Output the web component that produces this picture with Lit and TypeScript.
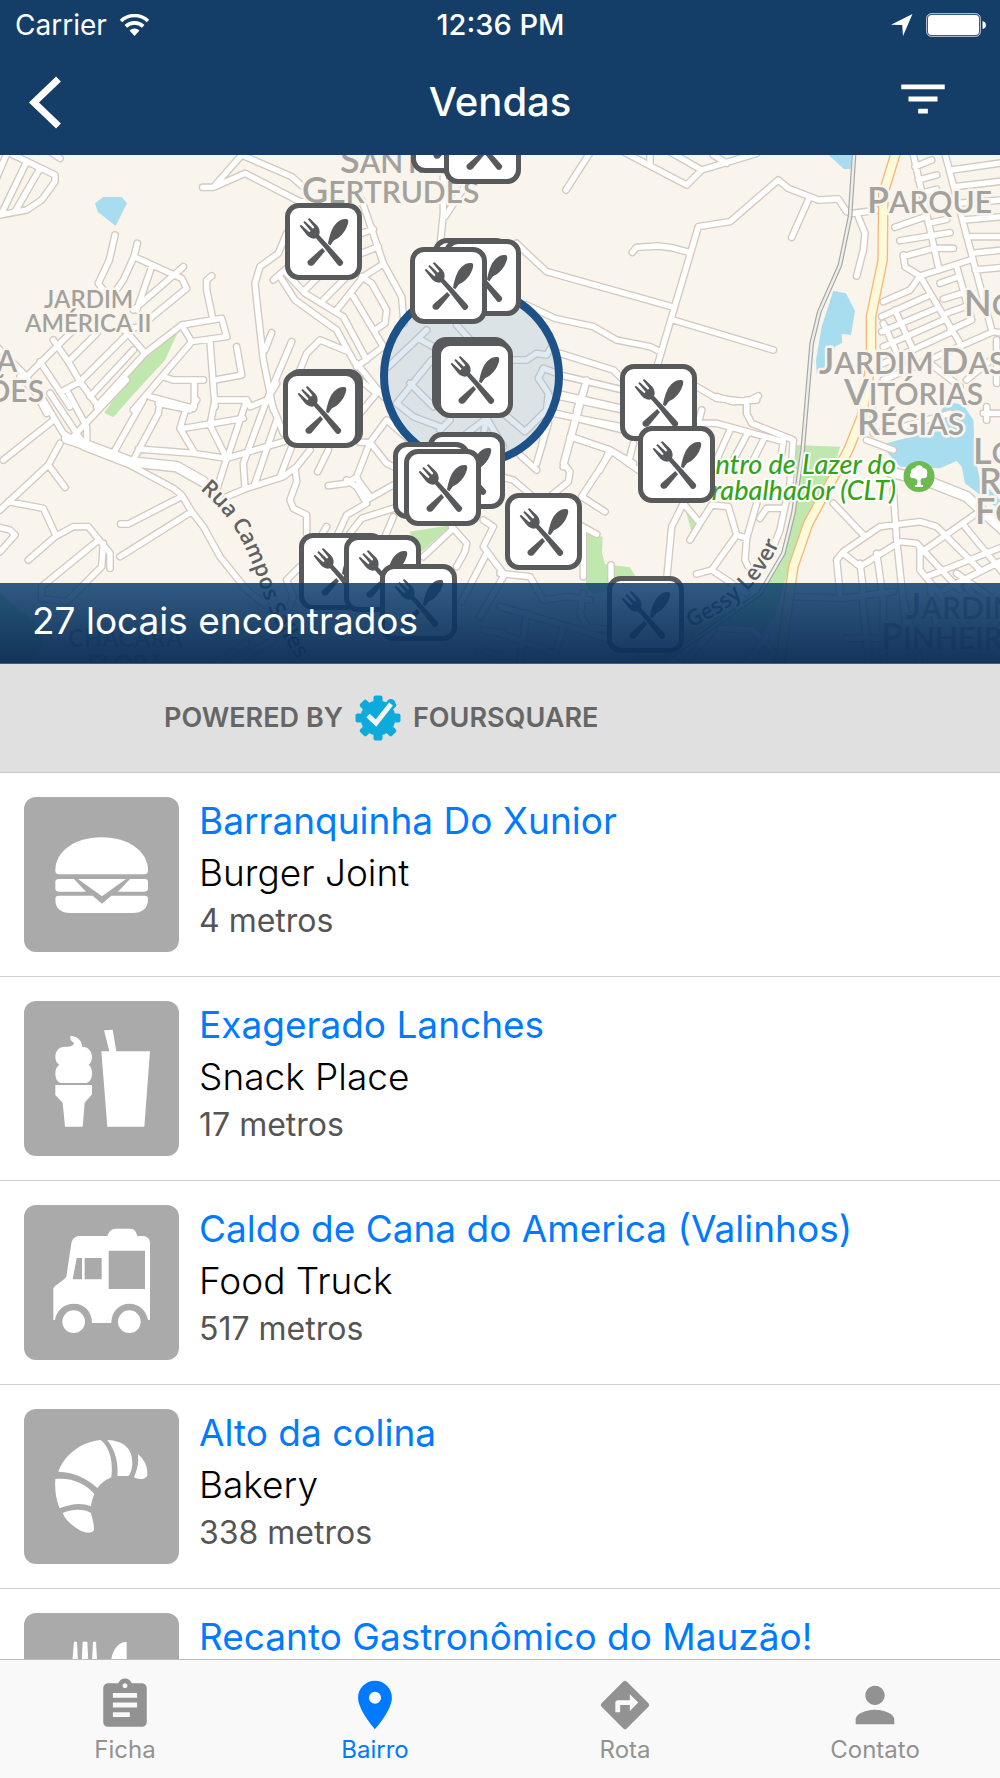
import { LitElement, html, svg, css } from "lit";
import { customElement, property, state } from "lit/decorators.js";

interface Sheet {
  x: number;
  y: number;
  roads: string;
}

/* Street network, drawn sheet by sheet at three units per map pixel. */
const SHEETS: Sheet[] = [
  {
    x: 0,
    y: 150,
    roads: `M25 0L-30 130M30 10L165 75 165 95 125 150 80 180 0 195M80 35L5 190M120 55L45 185M130 -10L180 25
      M608 112H640L725 15 875 80 915 115M640 112L735 70 900 155H960
      M345 255L328 330 295 400 325 440M412 280L402 320 370 390 335 440M402 320L545 385 560 415 420 530 370 540M455 350L410 480
      M550 350L400 480M635 378L620 390 620 420 637 500M380 545L435 610M215 545L80 680 -10 590M435 610L545 525 665 505 680 560 575 575 400 780M545 525L575 575
      M160 570L205 635 240 695 295 770M120 635L210 770M205 635L290 550M185 725L240 695 380 555M270 740L400 600M290 770L435 610M80 680L140 790
      M490 680L520 690 610 690M583 695V770M630 575L645 770M645 690L725 675 710 590M645 750H740L750 770 800 750 830 700M450 740L580 775
      M860 250L835 310 780 350 765 400 770 450 790 630 820 780M795 600L815 548M875 575L805 740M820 390L860 355M840 380L885 450 1010 540 1065 640
      M860 370L915 430 1030 500 1100 630M915 420L965 370M970 450L1035 385M1010 480L1090 380 1145 345M1085 150L1150 340 1205 440 1212 520M1085 250L1120 238M1085 310L1135 290
      M1085 380L1115 400 1160 480 1155 520 1125 540M1060 440L1150 590M1070 650L1150 590M900 660L920 610 960 570 1045 605M1070 640L1150 740M1080 690L1130 730 1080 790
      M1330 80V190L1320 290M1335 200L1400 100`,
  },
  {
    x: 500,
    y: 150,
    roads: `M275 0L198 120M360 0L560 105 605 60 500 0M450 0V45M605 60L670 40 770 10M640 15L680 40M50 280L70 300 140 365 515 470M80 465L165 505 280 530 350 570 450 590 480 605
      M465 670L595 230 690 215 835 90 865 115 955 150 1015 147 1040 185 1060 190 1150 178M925 150L875 262M397 307L410 292 475 288 515 293 570 308M520 510L820 600
      M1075 200L1095 250 1090 300 1070 378M180 610L340 660 370 690M180 675L370 720M260 690L230 780M180 740L370 780M590 710L650 745 740 755 775 738M740 755V790
      M1237 0L1315 350M1332 0L1475 540M1245 50L1295 30M1255 90L1310 75M1262 130L1310 118M1355 60L1510 38M1365 110L1510 93M1372 160L1510 150M1390 210L1510 200M1400 260H1510M1415 310L1510 300M1425 360L1510 352
      M1185 232L1275 200M1285 220L1340 208M1200 272L1350 248M1210 320L1300 295 1360 295M1210 315L1215 350 1260 378 1410 330M1260 378L1380 580M1260 378L1230 420 1150 455
      M1145 500L1290 435M1145 545L1310 475M1150 590L1330 510M1150 640L1350 548M1185 480L1240 600M1370 350L1415 510 1350 540M1320 400L1375 380M1330 447L1385 430M1340 490L1395 470
      M1150 690L1480 545 1510 550M1150 520L1210 650M1290 640L1380 710M1400 690L1510 600M1490 570V700`,
  },
  {
    x: 0,
    y: 400,
    roads: `M155 65L10 180M60 -70L130 0 190 100 250 140 390 195 520 265 545 285 575 335 610 380 660 470 740 570 830 640M0 330L145 195 180 130M145 195L195 262M25 305L130 325 165 400
      M85 480L165 410 220 380H265L330 460V505M290 425L125 560V595L200 605 305 500 310 430M-10 380L30 390 45 405 0 455M545 290L385 372H362M575 335L360 470
      M200 -30L260 80V125M210 120L380 -60M150 -20L250 130M340 160L430 0M400 180L475 40 480 0M475 10L570 30 590 0M645 0L630 75 680 175 650 270M415 147L580 160 680 175 850 125
      M550 85L630 72 730 55M585 160L540 85 560 20M740 0L685 165M800 0L730 190 735 265M830 60L765 250M875 140L840 230M680 290L740 265 850 230 890 200 930 150
      M885 205L890 245 870 300 880 325 920 345 920 400M985 150L953 215M810 0L850 100M985 257L1040 250 1065 235M1080 127H1110L1160 60 1240 130M1110 127L1070 230 1100 300 1180 255
      M1110 127L1160 190 1200 210M1040 240L1070 260 1100 310 1040 345 1010 410M1070 235L1110 290M1180 325L1085 355 1050 400M1155 410L1180 350M860 540L900 500M860 540L880 590 860 640M980 380L965 405
      M1355 380L1400 430 1395 455 1370 500M1360 385L1270 470M1480 380L1450 440 1510 520M1450 360L1480 380M1460 460L1385 605M1510 530L1440 650M1450 690L1510 700M1440 750L1510 770M650 790L740 730M700 790L820 720`,
  },
  {
    x: 500,
    y: 400,
    roads: `M60 165L110 210M240 0L190 190 210 215 205 245 150 290M170 40L370 90M215 110L330 150 415 210M330 160L245 290 315 335M400 130L385 190M110 190L145 70M0 230L40 240 110 300M230 370L290 403M250 390V530
      M600 70L650 70 850 125 845 160M690 90L650 180M740 105L700 180M790 120L760 180M605 30L595 70M740 0V40L755 70 880 120 870 250 840 390 820 440M650 -10L700 5 770 0
      M550 310L515 380 500 540M550 310L600 370 570 420M600 370L635 315 685 320 710 405 740 415M710 405L635 510 590 522M635 510L740 580M850 325H800L780 355M770 310L740 415 735 480 745 500M333 495V540
      M1000 310L1095 410M1010 480L1030 455 1140 380 1260 365 1310 380 1440 510M1010 480L1020 580M1030 460L1080 500 1200 425 1250 430 1380 570M1080 490L1090 570M1130 460L1150 600M1180 270L1190 420 1220 700
      M1260 440V510L1400 680M1260 460L1430 340M1280 530L1510 440M1395 380L1510 520M1330 570L1510 480M1370 520L1510 620M1460 20V60M1450 40H1510M1120 100L1160 95 1350 40M1100 120L1180 150
      M870 590L1030 595 1180 575M1085 580L1105 780M1150 600V780M1210 600L1260 790M1290 560L1320 740M0 520L90 530 130 600 200 590 270 600M0 620L240 690 330 720M0 700L160 760M250 580L240 640 260 680 330 690M80 640L60 780M190 680L160 780
      M660 685L760 690 850 790M640 690L560 780M800 710L740 790M1040 715H1150M1400 560L1510 700`,
  },
  {
    x: 370,
    y: 250,
    roads: `M170 240L55 350M145 265L190 290M185 330L80 460 130 500 210 530M120 400L190 470M260 225L310 280M430 330L470 330 500 310 530 315 545 290
      M560 370L520 355 505 385 535 430 530 480 465 545 400 490M350 500L340 560M290 550L350 505 400 590M210 540L240 510M540 440L515 590M650 395L580 650M560 430L780 480M550 490L780 535M600 560L720 600 690 660M720 600L790 640`,
  },
];

const WIDE_ROADS: Sheet[] = [
  { x: 0, y: 400, roads: "M200 115L260 135 390 185 530 200 610 245" },
  { x: 500, y: 400, roads: "M1170 215L1300 250 1400 290 1510 390" },
];

const PINS: [number, number][] = [
  [411, 96], [444, 107], [285, 203], [433, 238], [444, 239], [410, 247],
  [432, 337], [434, 339], [436, 341], [286, 369], [283, 371], [620, 364],
  [638, 426], [428, 432], [393, 442], [404, 449], [505, 493], [308, 533],
  [299, 533], [344, 535], [380, 564], [607, 576],
];

interface Place {
  name: string;
  kind: string;
  metres: number;
  icon: string;
}

const PLACES: Place[] = [
  { name: "Barranquinha Do Xunior", kind: "Burger Joint", metres: 4, icon: "burger" },
  { name: "Exagerado Lanches", kind: "Snack Place", metres: 17, icon: "snack" },
  { name: "Caldo de Cana do America (Valinhos)", kind: "Food Truck", metres: 517, icon: "truck" },
  { name: "Alto da colina", kind: "Bakery", metres: 338, icon: "bakery" },
  { name: "Recanto Gastronômico do Mauzão!", kind: "", metres: 0, icon: "restaurant" },
];

const PLACE_ICONS: Record<string, unknown> = {
  burger: svg`<path d="M94 220C94 165 150 121 233 121S372 165 372 220Q372 232 362 232H104Q94 232 94 220z"/>
    <path d="M104 246H150L186 284H104Q94 284 94 274V256Q94 246 104 246zM162 246H306L234 298zM318 246H362Q372 246 372 256V274Q372 284 362 284H282z"/>
    <path d="M104 296H206L234 320 262 296H362Q372 296 372 306C372 335 355 348 325 348H140C110 348 94 335 94 306Q94 296 104 296z"/>`,
  snack: svg`<path d="M140 104C162 106 174 120 175 137C192 137 204 150 204 168C204 180 200 187 194 191C202 197 204 205 204 218C204 235 195 246 182 246H116C102 246 94 235 94 218C94 205 97 197 106 191C97 186 94 178 94 168C94 148 106 137 122 137C138 138 150 134 150 125C142 121 136 112 140 104z"/>
    <path d="M94 252H204V280L182 305 176 377H123L116 305 94 282zM232 151H256L240 88 266 86 277 151H378L361 377H250z"/>`,
  truck: svg`<path fill-rule="evenodd" d="M88 345V250C92 240 118 228 127 215L142 115C145 100 155 93 168 93H250C255 80 262 71 275 71H318C332 71 336 80 340 93H355C370 93 378 102 378 115V345H372C366 315 345 296 316 296C285 296 262 320 262 354H204C204 320 182 296 150 296C120 296 98 315 93 345zM158 159H174V223H146zM182 159H233V223H182zM254 137H363V252H254z"/>
    <circle cx="149" cy="350" r="34"/><circle cx="316" cy="350" r="34"/>`,
  bakery: svg`<path d="M103 188C120 140 170 98 230 93C258 115 268 160 262 205C245 212 232 222 220 237C185 205 150 190 103 188z"/>
    <path d="M250 93C300 95 325 120 325 160C325 180 320 195 313 201H280C284 165 275 125 250 93zM342 136C362 152 372 175 370 200C362 213 342 212 330 205C338 185 345 165 342 136z"/>
    <path d="M94 210C145 205 185 225 211 255C206 268 202 280 201 292C170 280 140 285 107 298C95 270 92 240 94 210zM116 312C150 298 180 300 201 312C205 330 212 350 209 365C198 375 180 370 165 362C145 350 125 335 116 312z"/>`,
  restaurant: svg`<path d="M150 86h9l3 60h11l3-60h14l3 60h11l3-60h9l4 70c0 24-14 34-24 38l6 170c0 20-40 20-40 0l6-170c-10-4-24-14-24-38zM260 150C264 112 282 86 308 87V364c0 20-34 20-34 0l6-134h-22z"/>`,
};

interface Tab {
  id: string;
  label: string;
  path: string;
}

const TABS: Tab[] = [
  {
    id: "ficha",
    label: "Ficha",
    path: "M19 3h-4.18C14.4 1.84 13.3 1 12 1c-1.3 0-2.4.84-2.82 2H5c-1.1 0-2 .9-2 2v14c0 1.1.9 2 2 2h14c1.100 0 2-.9 2-2V5c0-1.100-.9-2-2-2zm-7 0c.55 0 1 .45 1 1s-.45 1-1 1-1-.45-1-1 .45-1 1-1zm2 14H7v-2h7v2zm3-4H7v-2h10v2zm0-4H7V7h10v2z",
  },
  {
    id: "bairro",
    label: "Bairro",
    path: "M12 2C8.130 2 5 5.130 5 9c0 5.250 7 13 7 13s7-7.750 7-13c0-3.870-3.130-7-7-7zm0 9.500a2.500 2.500 0 1 1 0-5 2.500 2.500 0 0 1 0 5z",
  },
  {
    id: "rota",
    label: "Rota",
    path: "M21.710 11.290l-9-9a1 1 0 0 0-1.410 0l-9 9a1 1 0 0 0 0 1.410l9 9a1 1 0 0 0 1.410 0l9-9a1 1 0 0 0 0-1.410zM14 14.500V12h-4v3H8v-4c0-.55.45-1 1-1h5V7.500l3.500 3.500-3.500 3.500z",
  },
  {
    id: "contato",
    label: "Contato",
    path: "M12 12c2.210 0 4-1.790 4-4s-1.790-4-4-4-4 1.790-4 4 1.790 4 4 4zm0 2c-2.670 0-8 1.340-8 4v2h16v-2c0-2.660-5.330-4-8-4z",
  },
];

const FONT = css`"Inter", "Roboto", "Liberation Sans", sans-serif`;

@customElement("status-bar")
class StatusBar extends LitElement {
  static styles = css`
    :host { display: block; }
    .bar { display: grid; grid-template-columns: 1fr auto 1fr; align-items: center; height: 48px; padding: 2px 14px 0 15px; box-sizing: border-box; color: #fff; line-height: 32px; }
    .left { display: flex; align-items: center; gap: 12px; font-size: 28px; }
    .time { font-size: 29px; font-weight: 500; }
    .right { display: flex; align-items: center; justify-content: flex-end; gap: 13px; }
    svg { display: block; fill: #fff; }
  `;
  render() {
    return html`<div class="bar">
      <div class="left">
        <span>Carrier</span>
        <svg width="31" height="22" viewBox="0 0 31 22" aria-hidden="true">
          <path d="M15.500 22L10.500 16.500A7 7 0 0 1 20.500 16.500z" />
          <path d="M6.800 12.400A12.500 12.500 0 0 1 24.200 12.400M2 7A19.500 19.500 0 0 1 29 7" fill="none" stroke="#fff" stroke-width="3.600" />
        </svg>
      </div>
      <span class="time">12:36 PM</span>
      <div class="right">
        <svg width="22" height="22" viewBox="0 0 22 22" aria-hidden="true"><path d="M21.500 0L12 22 11.200 11 0 10.800z" /></svg>
        <svg width="60" height="24" viewBox="0 0 60 24" aria-hidden="true">
          <rect x="0.700" y="0.700" width="53.600" height="22.600" rx="4.500" fill="none" stroke="#fff" stroke-width="1" opacity=".8" />
          <rect x="2" y="2" width="51" height="20" rx="3.500" />
          <path d="M56.500 8Q60 9 60 12T56.500 16z" />
        </svg>
      </div>
    </div>`;
  }
}

@customElement("places-map")
class PlacesMap extends LitElement {
  @property({ type: Number }) total = 0;

  static styles = css`
    :host { display: block; }
    .map { position: relative; overflow: hidden; aspect-ratio: 1000 / 509; background: #f9f5ed; }
    .canvas { display: block; width: 100%; height: 100%; }
    .casing path { fill: none; stroke: #d3c9c0; stroke-width: 24; stroke-linecap: round; stroke-linejoin: round; }
    .fill path { fill: none; stroke: #fff; stroke-width: 16; stroke-linecap: round; stroke-linejoin: round; }
    .casing .wide { stroke-width: 36; }
    .fill .wide { stroke-width: 28; }
    .water { fill: #a8ddf0; }
    .park { fill: #c0e8ae; }
    .district { font-family: "Lato", sans-serif; font-weight: 600; font-size: 30px; fill: #a3a19d; stroke: #f9f5ed; stroke-width: 5px; stroke-linejoin: round; paint-order: stroke; }
    .district .cap { font-size: 36px; }
    .district .minor { font-size: 24px; }
    .street { font-family: "Open Sans", sans-serif; font-weight: 600; font-size: 66px; fill: #606162; stroke: #f9f5ed; stroke-width: 14px; stroke-linejoin: round; paint-order: stroke; }
    .leisure { font-family: "Lato", sans-serif; font-weight: 500; font-style: italic; font-size: 27px; fill: #35a417; stroke: #fff; stroke-width: 4px; stroke-linejoin: round; paint-order: stroke; text-anchor: end; }
    .pin { position: absolute; width: 77px; height: 77px; padding: 0; border: 5px solid #58595b; border-radius: 14px; background: #fff; cursor: pointer; }
    .pin svg { display: block; width: 67px; height: 67px; fill: #58595b; }
    .found { position: absolute; left: 0; right: 0; bottom: 0; height: 81px; display: flex; align-items: center; padding: 0 32px 4px; box-sizing: border-box; border-bottom: 1px solid #2f6192; background: linear-gradient(rgba(10, 60, 110, 0.84), rgba(12, 46, 86, 0.97)); color: #fff; font-size: 37px; line-height: 46px; }
  `;

  private sheets(list: Sheet[], cls: string) {
    return list.map(
      (s) => svg`<path class=${cls} transform="translate(${s.x} ${s.y}) scale(.33333)" d=${s.roads} />`
    );
  }

  render() {
    return html`<section class="map" aria-label="Mapa">
      <svg class="canvas" viewBox="0 155 1000 509" preserveAspectRatio="xMidYMin slice">
        <defs>
          <path id="campos" d="M600 268C690 345 735 425 775 540C805 640 840 700 925 830" />
          <path id="gessy" d="M570 682C680 640 790 560 852 395" />
        </defs>
        <g transform="translate(0 150) scale(.33333)">
          <path class="water" d="M285 160L310 141H365L381 160 347 228 293 185z" />
          <path class="park" d="M533 548L495 630 385 750 340 802 313 788 435 610z" />
        </g>
        <g transform="translate(500 150) scale(.33333)">
          <path class="water" d="M980 10H1055L1052 57H1032zM1000 422L1038 430 1065 483 1053 555 1025 552 1027 578 1005 590 985 665 950 670 948 630 965 530z" />
        </g>
        <g transform="translate(0 400) scale(.33333)">
          <path class="park" d="M1228 395L1355 375 1265 455zM0 580L120 680 130 740 70 800H0z" />
        </g>
        <g transform="translate(500 400) scale(.33333)">
          <path class="water" d="M1160 130L1290 95 1330 20 1360 8 1390 15 1420 60 1425 170 1440 240 1500 300V330L1395 250 1385 200 1370 183 1320 205 1200 200 1160 155z" />
          <path class="park" d="M888 135L1020 140 1000 215 890 440 850 560 830 640 790 700 600 690 500 790H360L560 680 780 580 850 450 885 300zM245 425L265 400 308 410 306 460 315 492 390 502 407 530V550L345 570 280 582 258 560V480zM550 310L590 380 575 395zM1125 0L1135 60 1120 90 1100 80z" />
        </g>
        <g class="casing">${this.sheets(WIDE_ROADS, "wide")}${this.sheets(SHEETS, "")}</g>
        <g class="fill">${this.sheets(WIDE_ROADS, "wide")}${this.sheets(SHEETS, "")}</g>
        <g fill="none" stroke-linejoin="round" transform="translate(500 150) scale(.33333)">
          <path d="M1190 0L1150 130 1148 330 1113 500V640L1085 800 1045 900 925 1120 880 1250 860 1390 840 1540" stroke="#f5b878" stroke-width="32" />
          <path d="M1190 0L1150 130 1148 330 1113 500V640L1085 800 1045 900 925 1120 880 1250 860 1390 840 1540" stroke="#fcfad9" stroke-width="24" />
          <path d="M1063 0L1050 200 1020 345 958 485 935 580 908 900 880 1090 850 1210 780 1330 640 1430 480 1540" stroke="#a6a6a6" stroke-width="14" />
          <path d="M1063 0L1050 200 1020 345 958 485 935 580 908 900 880 1090 850 1210 780 1330 640 1430 480 1540" stroke="#efeeeb" stroke-width="7" />
        </g>
        <circle cx="471.500" cy="376" r="87.500" fill="rgba(150,185,215,.3)" stroke="#1d5289" stroke-width="8" />
        <g class="district">
          <text x="340" y="173"><tspan class="cap">S</tspan>ANTA</text>
          <text x="302" y="203"><tspan class="cap">G</tspan>ERTRUDES</text>
          <text class="minor" x="44" y="308">JARDIM</text>
          <text class="minor" x="25" y="332">AMÉRICA II</text>
          <text x="17" y="372" text-anchor="end">A</text>
          <text x="44" y="402" text-anchor="end">ÕES</text>
          <text x="867" y="213"><tspan class="cap">P</tspan>ARQUE</text>
          <text x="964" y="316"><tspan class="cap">N</tspan>O</text>
          <text x="819" y="374"><tspan class="cap">J</tspan>ARDIM <tspan class="cap">D</tspan>AS</text>
          <text x="844" y="405"><tspan class="cap">V</tspan>ITÓRIAS</text>
          <text x="857" y="435"><tspan class="cap">R</tspan>ÉGIAS</text>
          <text x="973" y="464"><tspan class="cap">L</tspan>O</text>
          <text x="979" y="494"><tspan class="cap">R</tspan></text>
          <text x="975" y="524"><tspan class="cap">F</tspan>O</text>
          <text class="minor" x="68" y="647">CHÁCARA</text>
          <text class="minor" x="88" y="673">FLORA</text>
          <text x="906" y="619"><tspan class="cap">J</tspan>ARDIM</text>
          <text x="881" y="649"><tspan class="cap">P</tspan>INHEIR</text>
        </g>
        <g transform="translate(0 400) scale(.33333)"><text class="street"><textPath href="#campos">Rua Campos Salles</textPath></text></g>
        <g transform="translate(500 400) scale(.33333)"><text class="street"><textPath href="#gessy">Gessy Lever</textPath></text></g>
        <text class="leisure" x="896" y="474">Centro de Lazer do</text>
        <text class="leisure" x="896" y="500">Trabalhador (CLT)</text>
        <circle cx="919" cy="476.500" r="15.500" fill="#6dbb4f" />
        <path fill="#fff" d="M917 485L917.500 480 914 478C910 479 909 475 911 473C910 469 914 468 915 468C917 464 922 465 923 468C927 468 928 472 927 474C928 478 924 479 922 478L920.500 480 921 485H923V487H915V485z" />
      </svg>
      ${PINS.map(
        ([x, y]) => html`<button class="pin" aria-label="Local" style="left:${x / 10}%;top:${((y - 155) / 509) * 100}%">
          <svg viewBox="15 15 201 201" aria-hidden="true">
            <path d="M44 69L48 65 73 88 77 84 55 58 59 54 84 77 88 73 68 48 74 46 97 68C104 77 106 88 102 96L127 123 173 174C179 182 167 194 159 187L116 132 93 106C82 109 72 104 66 97z" />
            <path d="M187 49C168 44 152 60 143 76C135 92 131 110 129 122L136 127 147 112C162 106 179 90 186 70Q193 54 187 49z" />
            <path d="M112 135L120 145 86 185C78 194 62 183 69 173z" />
          </svg>
        </button>`
      )}
      <div class="found">${this.total} locais encontrados</div>
    </section>`;
  }
}

@customElement("place-row")
class PlaceRow extends LitElement {
  @property({ attribute: false }) place!: Place;

  static styles = css`
    :host { display: block; }
    .row { display: flex; gap: 20px; height: 204px; padding: 24px 24px 0; box-sizing: border-box; border-bottom: 1px solid #d2d2d4; text-decoration: none; }
    .tile { flex: none; width: 155px; height: 155px; border-radius: 12px; background: #aaa; fill: #fff; }
    .text { display: flex; flex-direction: column; min-width: 0; }
    .name { font-size: 37px; line-height: 48px; color: #007aff; white-space: nowrap; }
    .kind { font-size: 37px; line-height: 56px; font-weight: 300; color: #000; }
    .distance { font-size: 32px; line-height: 40px; color: #555; }
  `;

  render() {
    const p = this.place;
    return html`<a class="row" href="#">
      <svg class="tile" viewBox="0 0 465 465" aria-hidden="true">${PLACE_ICONS[p.icon]}</svg>
      <div class="text">
        <span class="name">${p.name}</span>
        ${p.kind
          ? html`<span class="kind">${p.kind}</span><span class="distance">${p.metres} metros</span>`
          : ""}
      </div>
    </a>`;
  }
}

@customElement("tab-bar")
class TabBar extends LitElement {
  @state() private active = "bairro";

  static styles = css`
    :host { display: block; }
    .tabs { display: grid; grid-template-columns: repeat(4, 1fr); height: 119px; box-sizing: border-box; border-top: 1px solid #bcbcbc; background: #f9f9f9; }
    .tab { display: flex; flex-direction: column; align-items: center; gap: 1px; padding: 16px 0 0; border: 0; background: none; color: #929292; font: inherit; font-size: 24px; line-height: 30px; cursor: pointer; }
    .tab svg { display: block; width: 58px; height: 58px; fill: currentColor; }
    .active { color: #007aff; }
  `;

  render() {
    return html`<nav class="tabs">
      ${TABS.map(
        (t) => html`<button class="tab ${t.id === this.active ? "active" : ""}" @click=${() => (this.active = t.id)}>
          <svg viewBox="0 0 24 24" aria-hidden="true"><path d=${t.path} /></svg>
          <span>${t.label}</span>
        </button>`
      )}
    </nav>`;
  }
}

@customElement("app-root")
class AppRoot extends LitElement {
  static styles = css`
    :host { display: flex; flex-direction: column; height: 100vh; background: #fff; font-family: ${FONT}; }
    .top { flex: none; background: #143d68; color: #fff; }
    .nav { display: grid; grid-template-columns: 1fr auto 1fr; align-items: center; height: 107px; padding: 0 48px 0 24px; box-sizing: border-box; }
    .title { margin: 0; padding: 0 0 0 24px; font-size: 40px; line-height: 46px; font-weight: 500; }
    .icon { display: block; padding: 0; border: 0; background: none; cursor: pointer; }
    .icon svg { display: block; fill: #fff; }
    .filter { justify-self: end; padding-bottom: 6px; }
    .map { flex: none; }
    .credit { flex: none; display: flex; align-items: center; gap: 12px; height: 109px; padding-left: 164px; box-sizing: border-box; border-bottom: 1px solid #c8c7cc; background: #e0e0e0; color: #666; font-size: 27px; line-height: 30px; font-weight: 600; }
    .credit svg { display: block; }
    .list { flex: 1; min-height: 0; overflow: hidden; }
    .tabs { flex: none; }
  `;

  render() {
    return html`
      <header class="top">
        <status-bar></status-bar>
        <div class="nav">
          <button class="icon" aria-label="Voltar">
            <svg width="48" height="60" viewBox="0 0 48 60"><path d="M34.500 7L10 30.500 34.500 54" fill="none" stroke="#fff" stroke-width="7" /></svg>
          </button>
          <h1 class="title">Vendas</h1>
          <button class="icon filter" aria-label="Filtrar">
            <svg width="58" height="58" viewBox="0 0 24 24"><path d="M10 18h4v-2h-4v2zM3 6v2h18V6H3zm3 7h12v-2H6v2z" /></svg>
          </button>
        </div>
      </header>
      <places-map class="map" .total=${27}></places-map>
      <div class="credit">
        <span>POWERED BY</span>
        <svg width="46" height="46" viewBox="0 0 46 46" aria-hidden="true">
          <g fill="#0cabdb">
            <circle cx="23" cy="23" r="17.500" />
            ${[0, 45, 90, 135].map((a) => svg`<rect x="18.500" y="0.500" width="9" height="45" rx="2" transform="rotate(${a} 23 23)" />`)}
          </g>
          <path d="M14 22L21 28.500 36 8.500" fill="none" stroke="#0cabdb" stroke-width="9" stroke-linejoin="round" stroke-linecap="round" />
          <path d="M13 20.500L21 28 36 9" fill="none" stroke="#f4f4f4" stroke-width="5" />
        </svg>
        <span>FOURSQUARE</span>
      </div>
      <main class="list">${PLACES.map((p) => html`<place-row .place=${p}></place-row>`)}</main>
      <tab-bar class="tabs"></tab-bar>
    `;
  }
}
